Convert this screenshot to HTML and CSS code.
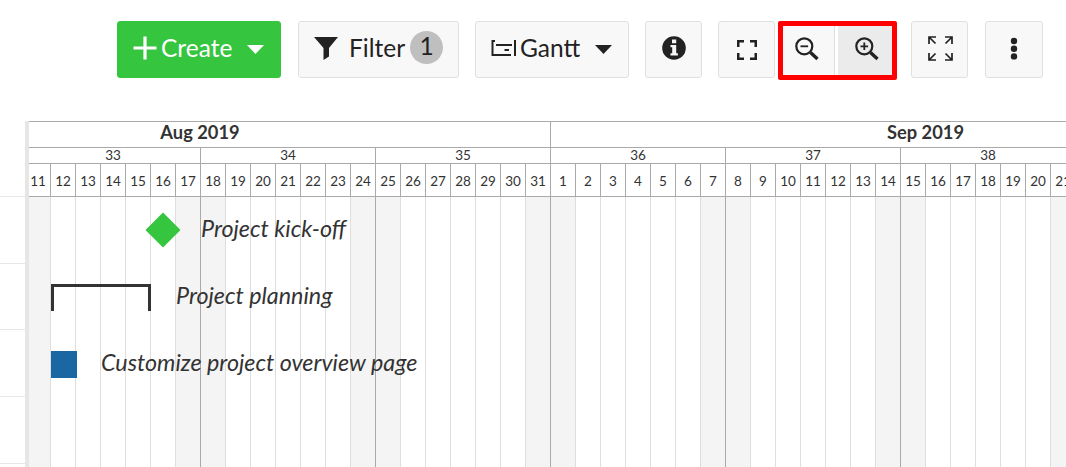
FILE: index.html
```html
<!DOCTYPE html>
<html lang="en">
<head>
<meta charset="utf-8">
<title>Gantt</title>
<link rel="stylesheet" href="styles.css">
</head>
<body>
<header class="toolbar">
  <button class="btn create">
    <svg class="plus" width="24" height="24" viewBox="0 0 24 24"><path d="M12 0.5v23M0.5 12h23" stroke="#fff" stroke-width="3.2"/></svg>
    <span>Create</span>
    <svg class="caret" width="17" height="9" viewBox="0 0 17 9"><path d="M0 0h17L8.500 9z" fill="currentColor"/></svg>
  </button>
  <button class="btn filter">
    <svg width="24" height="23" viewBox="0 0 24 23"><path d="M0 0h24l-9 11v8.500L9.500 23V11z" fill="#222"/></svg>
    <span>Filter</span>
    <span class="badge">1</span>
  </button>
  <button class="btn gantt">
    <svg width="25" height="18" viewBox="0 0 25 18"><path d="M4 2H1.500v14H20M24 1v16M5 6h16M13.500 11h4.500" fill="none" stroke="#222" stroke-width="2"/></svg>
    <span>Gantt</span>
    <svg class="caret" width="17" height="9" viewBox="0 0 17 9"><path d="M0 0h17L8.500 9z" fill="currentColor"/></svg>
  </button>
  <button class="btn info" aria-label="Info">
    <svg width="24" height="24" viewBox="0 0 24 24"><circle cx="12" cy="12" r="11.800" fill="#222"/><path d="M10 3.500h4.200v3.700H10zM8.500 9h5.700v8.200h1.700V19.500H8.500v-2.300h1.700v-5.900H8.500z" fill="#f8f8f8"/></svg>
  </button>
  <button class="btn fit" aria-label="Fit">
    <svg width="20" height="20" viewBox="0 0 20 20"><path d="M1.250 7V1.250H7M13 1.250h5.750V7M18.750 13v5.750H13M7 18.750H1.250V13" fill="none" stroke="#222" stroke-width="2.500"/></svg>
  </button>
  <div class="zoom-group">
    <button class="zoom-btn" aria-label="Zoom out">
      <svg width="24" height="24" viewBox="0 0 24 24"><circle cx="9.300" cy="9.300" r="8" fill="none" stroke="#222" stroke-width="2.200"/><path d="M15.500 15.500l7 6.500" stroke="#222" stroke-width="3.400"/><path d="M5.500 9.300h7.600" stroke="#222" stroke-width="1.800"/></svg>
    </button>
    <button class="zoom-btn zoom-in" aria-label="Zoom in">
      <svg width="24" height="24" viewBox="0 0 24 24"><circle cx="9.300" cy="9.300" r="8" fill="none" stroke="#222" stroke-width="2.200"/><path d="M15.500 15.500l7 6.500" stroke="#222" stroke-width="3.400"/><path d="M5.500 9.300h7.600M9.300 5.500v7.600" stroke="#222" stroke-width="1.800"/></svg>
    </button>
  </div>
  <button class="btn full" aria-label="Full screen">
    <svg width="25" height="25" viewBox="0 0 25 25"><path d="M1 8V1h7M1 1l6.500 6.500M17 1h7v7M24 1l-6.500 6.500M1 17v7h7M1 24l6.500-6.500M24 17v7h-7M24 24l-6.500-6.500" fill="none" stroke="#222" stroke-width="1.700"/></svg>
  </button>
  <button class="btn more" aria-label="More">
    <svg width="8" height="24" viewBox="0 0 8 24"><g fill="#222"><circle cx="4" cy="4" r="3.200"/><circle cx="4" cy="11.700" r="3.200"/><circle cx="4" cy="19.400" r="3.200"/></g></svg>
  </button>
</header>
<main class="planner">
  <aside class="rows"><div class="row head"></div><div class="row"></div><div class="row"></div><div class="row"></div><div class="row"></div></aside>
  <section class="timeline">
    <div class="months"><div class="month aug">Aug 2019</div><div class="month">Sep 2019</div></div>
    <div class="weeks"><div>33</div><div>34</div><div>35</div><div>36</div><div>37</div><div>38</div></div>
    <div class="days">
      <div class="day off"><b>11</b></div><div class="day"><b>12</b></div><div class="day"><b>13</b></div><div class="day"><b>14</b></div><div class="day"><b>15</b></div><div class="day"><b>16</b></div><div class="day off end"><b>17</b></div>
      <div class="day off"><b>18</b></div><div class="day"><b>19</b></div><div class="day"><b>20</b></div><div class="day"><b>21</b></div><div class="day"><b>22</b></div><div class="day"><b>23</b></div><div class="day off end"><b>24</b></div>
      <div class="day off"><b>25</b></div><div class="day"><b>26</b></div><div class="day"><b>27</b></div><div class="day"><b>28</b></div><div class="day"><b>29</b></div><div class="day"><b>30</b></div><div class="day off end"><b>31</b></div>
      <div class="day off"><b>1</b></div><div class="day"><b>2</b></div><div class="day"><b>3</b></div><div class="day"><b>4</b></div><div class="day"><b>5</b></div><div class="day"><b>6</b></div><div class="day off end"><b>7</b></div>
      <div class="day off"><b>8</b></div><div class="day"><b>9</b></div><div class="day"><b>10</b></div><div class="day"><b>11</b></div><div class="day"><b>12</b></div><div class="day"><b>13</b></div><div class="day off end"><b>14</b></div>
      <div class="day off"><b>15</b></div><div class="day"><b>16</b></div><div class="day"><b>17</b></div><div class="day"><b>18</b></div><div class="day"><b>19</b></div><div class="day"><b>20</b></div><div class="day off end"><b>21</b></div>
    </div>
    <div class="tasks">
      <div class="task kickoff"><svg width="36" height="36" viewBox="0 0 36 36"><path d="M18 .5L35.500 18 18 35.500.5 18z" fill="#35c53f"/></svg><span>Project kick-off</span></div>
      <div class="task planning"><i class="bracket"></i><span>Project planning</span></div>
      <div class="task customize"><i class="bar"></i><span>Customize project overview page</span></div>
    </div>
  </section>
</main>
</body>
</html>
```
FILE: styles.css
```css
* { box-sizing: border-box; }
body {
  margin: 0;
  height: 467px;
  overflow: hidden;
  background: #fff;
  color: #333;
  font-family: Lato, "Liberation Sans", sans-serif;
}
button { font: inherit; color: inherit; margin: 0; padding: 0; }
svg { display: block; flex: none; }

.toolbar {
  display: flex;
  height: 121px;
  padding: 21px 0 0 117px;
}
.btn {
  display: flex;
  align-items: center;
  flex: none;
  height: 57px;
  border: 1px solid #e0e0e0;
  border-radius: 3px;
  background: #f8f8f8;
  color: #222;
  font-size: 24.500px;
  line-height: 30px;
}
.btn > span { margin-top: -4px; }
.btn > svg { margin-top: -3px; }
.btn > .caret { margin-top: 0; }
.create {
  width: 164px;
  padding-left: 15px;
  border-color: #35c53f;
  background: #35c53f;
  color: #fff;
}
.create span { width: 70px; margin-left: 4px; }
.create .caret { margin-left: 16px; }
.filter { width: 161px; margin-left: 17px; padding-left: 15px; }
.filter span { margin-left: 11px; }
.filter .badge {
  width: 33px;
  height: 33px;
  margin: -4px 0 0 5px;
  border-radius: 50%;
  background: #bfbfbf;
  line-height: 30px;
  text-align: center;
}
.gantt { width: 154px; margin-left: 16px; padding-left: 15px; }
.gantt span { width: 59px; margin-left: 4px; }
.gantt .caret { margin-left: 16px; }
.info { width: 57px; margin-left: 16px; padding-left: 16px; }
.fit { width: 57px; margin-left: 16px; padding-left: 18px; }
.btn.fit > svg { margin-top: 0; }
.zoom-group {
  display: flex;
  flex: none;
  width: 119px;
  height: 59px;
  margin-left: 3px;
  border: 5px solid #f00;
  border-radius: 2px;
}
.zoom-btn {
  display: flex;
  width: 52px;
  padding: 11px 0 0 12px;
  border: 0;
  border-right: 1px solid #ddd;
  background: #f8f8f8;
}
.zoom-in {
  width: 54px;
  margin-left: 3px;
  padding-left: 17px;
  border: 0;
  background: #ebebeb;
}
.full { width: 57px; margin-left: 14px; padding-left: 16px; }
.btn.full > svg { margin-top: -2px; }
.more { width: 58px; margin-left: 17px; padding-left: 24px; }
.btn.more > svg { margin-top: -1px; }

.planner { display: flex; height: 346px; }
.rows {
  flex: none;
  width: 29px;
  border-right: 4px solid #e6e6e6;
}
.row { height: 66.75px; border-bottom: 1px solid #e7e7e7; }
.row.head { height: 75.75px; }
.timeline {
  position: relative;
  flex: 1;
  display: flex;
  flex-direction: column;
  min-width: 0;
  overflow: hidden;
  border-top: 1px solid #aaa;
}
.months { display: flex; height: 26px; border-bottom: 1px solid #aaa; }
.month {
  flex: none;
  width: 750px;
  border-right: 1px solid #aaa;
  font-size: 18.300px;
  font-weight: 700;
  line-height: 20px;
  text-align: center;
}
.aug { width: 701px; margin-left: -179px; }
.weeks { display: flex; height: 16px; margin-left: -3px; border-bottom: 1px solid #aaa; }
.weeks div {
  flex: none;
  width: 175px;
  border-right: 1px solid #aaa;
  font-size: 13.500px;
  line-height: 15px;
  text-align: center;
}
.days { display: flex; flex: 1; margin-left: -3px; }
.day {
  flex: none;
  width: 25px;
  border-right: 1px solid #dedede;
}
.day b {
  display: block;
  width: 25px;
  height: 33px;
  border-right: 1px solid #aaa;
  border-bottom: 1px solid #aaa;
  background: #fff;
  font-size: 13.500px;
  font-weight: 400;
  line-height: 35px;
  text-align: center;
}
.off { background: #f4f4f4; }
.end { border-right-color: #aaa; }

/* Tasks sit on the free canvas above the day columns. */
.task {
  position: absolute;
  display: flex;
  font-size: 23.300px;
  font-style: italic;
  line-height: 28px;
  white-space: nowrap;
}
.kickoff { left: 116px; top: 90px; }
.kickoff span { margin: 2px 0 0 20px; }
.planning { left: 22px; top: 162px; }
.planning span { margin: -3px 0 0 25px; }
.customize { left: 22px; top: 229px; }
.customize span { margin: -3px 0 0 24px; }
.bracket {
  width: 100px;
  height: 27px;
  border: 3px solid #333;
  border-bottom: 0;
}
.bar { width: 26px; height: 27px; background: #1a67a3; }
```
